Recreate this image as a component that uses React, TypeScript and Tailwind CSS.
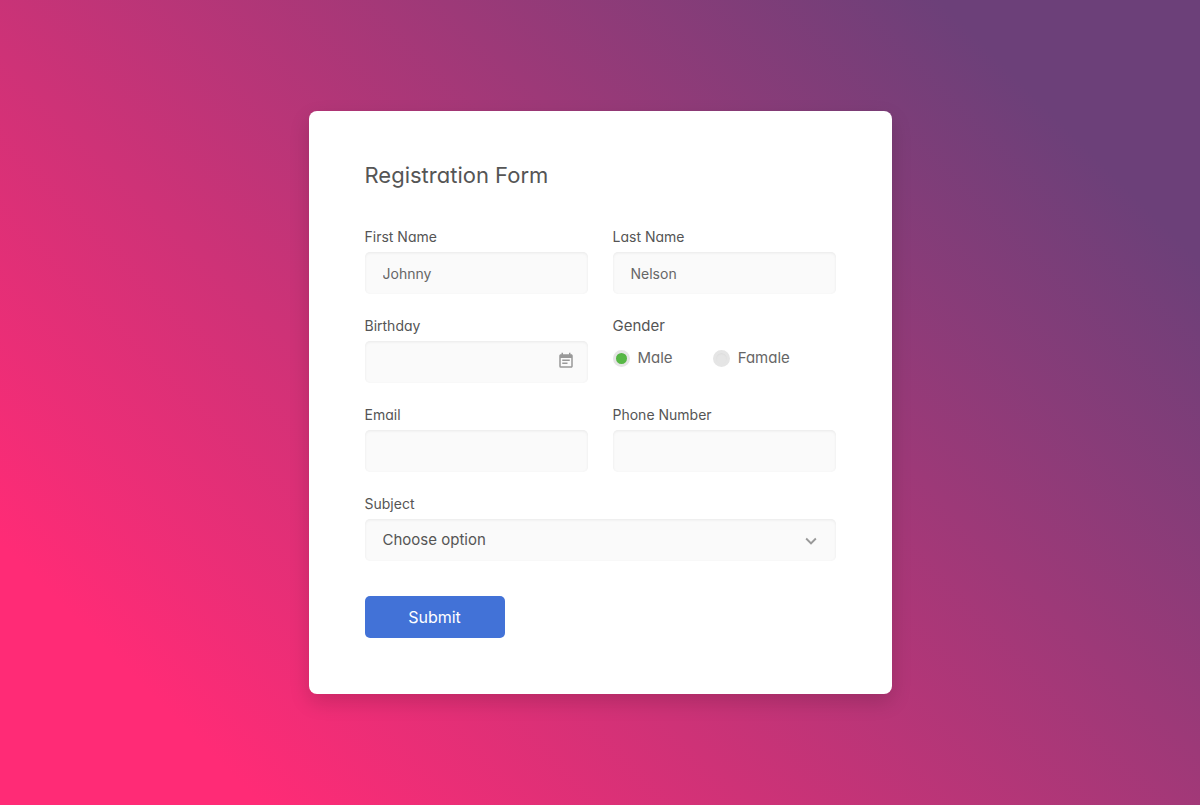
import { useState } from 'react';
import type { ReactNode } from 'react';
import { MdEventNote, MdExpandMore } from 'react-icons/md';

const control =
  'h-[42px] w-full rounded-[5px] bg-[#fafafa] px-[18px] leading-[24px] outline-none placeholder:text-[#666666] shadow-[inset_0_1px_3px_rgba(0,0,0,0.07)]';

function Field({ id, label, children }: { id: string; label: string; children: ReactNode }) {
  return (
    <div className="flex flex-col gap-[3px]">
      <label htmlFor={id} className="text-[14px] leading-[24px] text-[#555555]">
        {label}
      </label>
      {children}
    </div>
  );
}

function Radio({ label, checked, onSelect }: { label: string; checked: boolean; onSelect: () => void }) {
  return (
    <label className="flex items-center gap-2 text-[15px] leading-[24px] text-[#666666]">
      <input
        type="radio"
        name="gender"
        checked={checked}
        onChange={onSelect}
        className="size-[17px] appearance-none rounded-full border-[3px] border-[#e5e5e5] bg-[#e5e5e5] shadow-[inset_0_1px_2px_rgba(0,0,0,0.04)] checked:bg-[#57b846]"
      />
      {label}
    </label>
  );
}

export default function App() {
  const [gender, setGender] = useState('Male');

  return (
    <main className="flex min-h-screen items-center justify-center bg-[linear-gradient(45deg,#ff2b76_13%,#6c4079_87%)] p-4 font-['Inter',sans-serif] [font-feature-settings:'cv11']">
      <form
        className="w-full max-w-[583px] rounded-[8px] bg-white px-[56px] pt-[48px] pb-[56px] shadow-[0_8px_20px_rgba(0,0,0,0.15)]"
        onSubmit={(e) => e.preventDefault()}
      >
        <h1 className="mb-[34px] text-[22px] leading-[32px] text-[#555555]">Registration Form</h1>

        <div className="grid grid-cols-1 gap-x-[25px] gap-y-[20px] sm:grid-cols-2">
          <Field id="first-name" label="First Name">
            <input id="first-name" type="text" placeholder="Johnny" className={`${control} text-[14px] text-[#666666]`} />
          </Field>
          <Field id="last-name" label="Last Name">
            <input id="last-name" type="text" placeholder="Nelson" className={`${control} text-[14px] text-[#666666]`} />
          </Field>

          <Field id="birthday" label="Birthday">
            <div className="relative">
              <input id="birthday" type="text" className={`${control} text-[14px] text-[#666666]`} />
              <MdEventNote
                aria-hidden="true"
                className="pointer-events-none absolute top-[11px] right-[13px] size-[18px] text-[#999999]"
              />
            </div>
          </Field>
          <div role="radiogroup" aria-labelledby="gender-label" className="flex flex-col gap-2">
            <span id="gender-label" className="text-[15px] leading-[24px] text-[#555555]">
              Gender
            </span>
            <div className="flex gap-[40px]">
              <Radio label="Male" checked={gender === 'Male'} onSelect={() => setGender('Male')} />
              <Radio label="Famale" checked={gender === 'Famale'} onSelect={() => setGender('Famale')} />
            </div>
          </div>

          <Field id="email" label="Email">
            <input id="email" type="email" className={`${control} text-[14px] text-[#666666]`} />
          </Field>
          <Field id="phone" label="Phone Number">
            <input id="phone" type="tel" className={`${control} text-[14px] text-[#666666]`} />
          </Field>

          <div className="sm:col-span-2">
            <Field id="subject" label="Subject">
              <div className="relative">
                <select
                  id="subject"
                  defaultValue=""
                  className={`${control} appearance-none text-[15px] text-[#555555]`}
                >
                  <option value="">Choose option</option>
                </select>
                <MdExpandMore
                  aria-hidden="true"
                  className="pointer-events-none absolute top-[11px] right-[14px] size-[22px] text-[#999999]"
                />
              </div>
            </Field>
          </div>
        </div>

        <button
          type="submit"
          className="mt-[35px] block h-[42px] w-[140px] rounded-[5px] bg-[#4272d7] text-[16px] leading-[24px] text-white"
        >
          Submit
        </button>
      </form>
    </main>
  );
}
